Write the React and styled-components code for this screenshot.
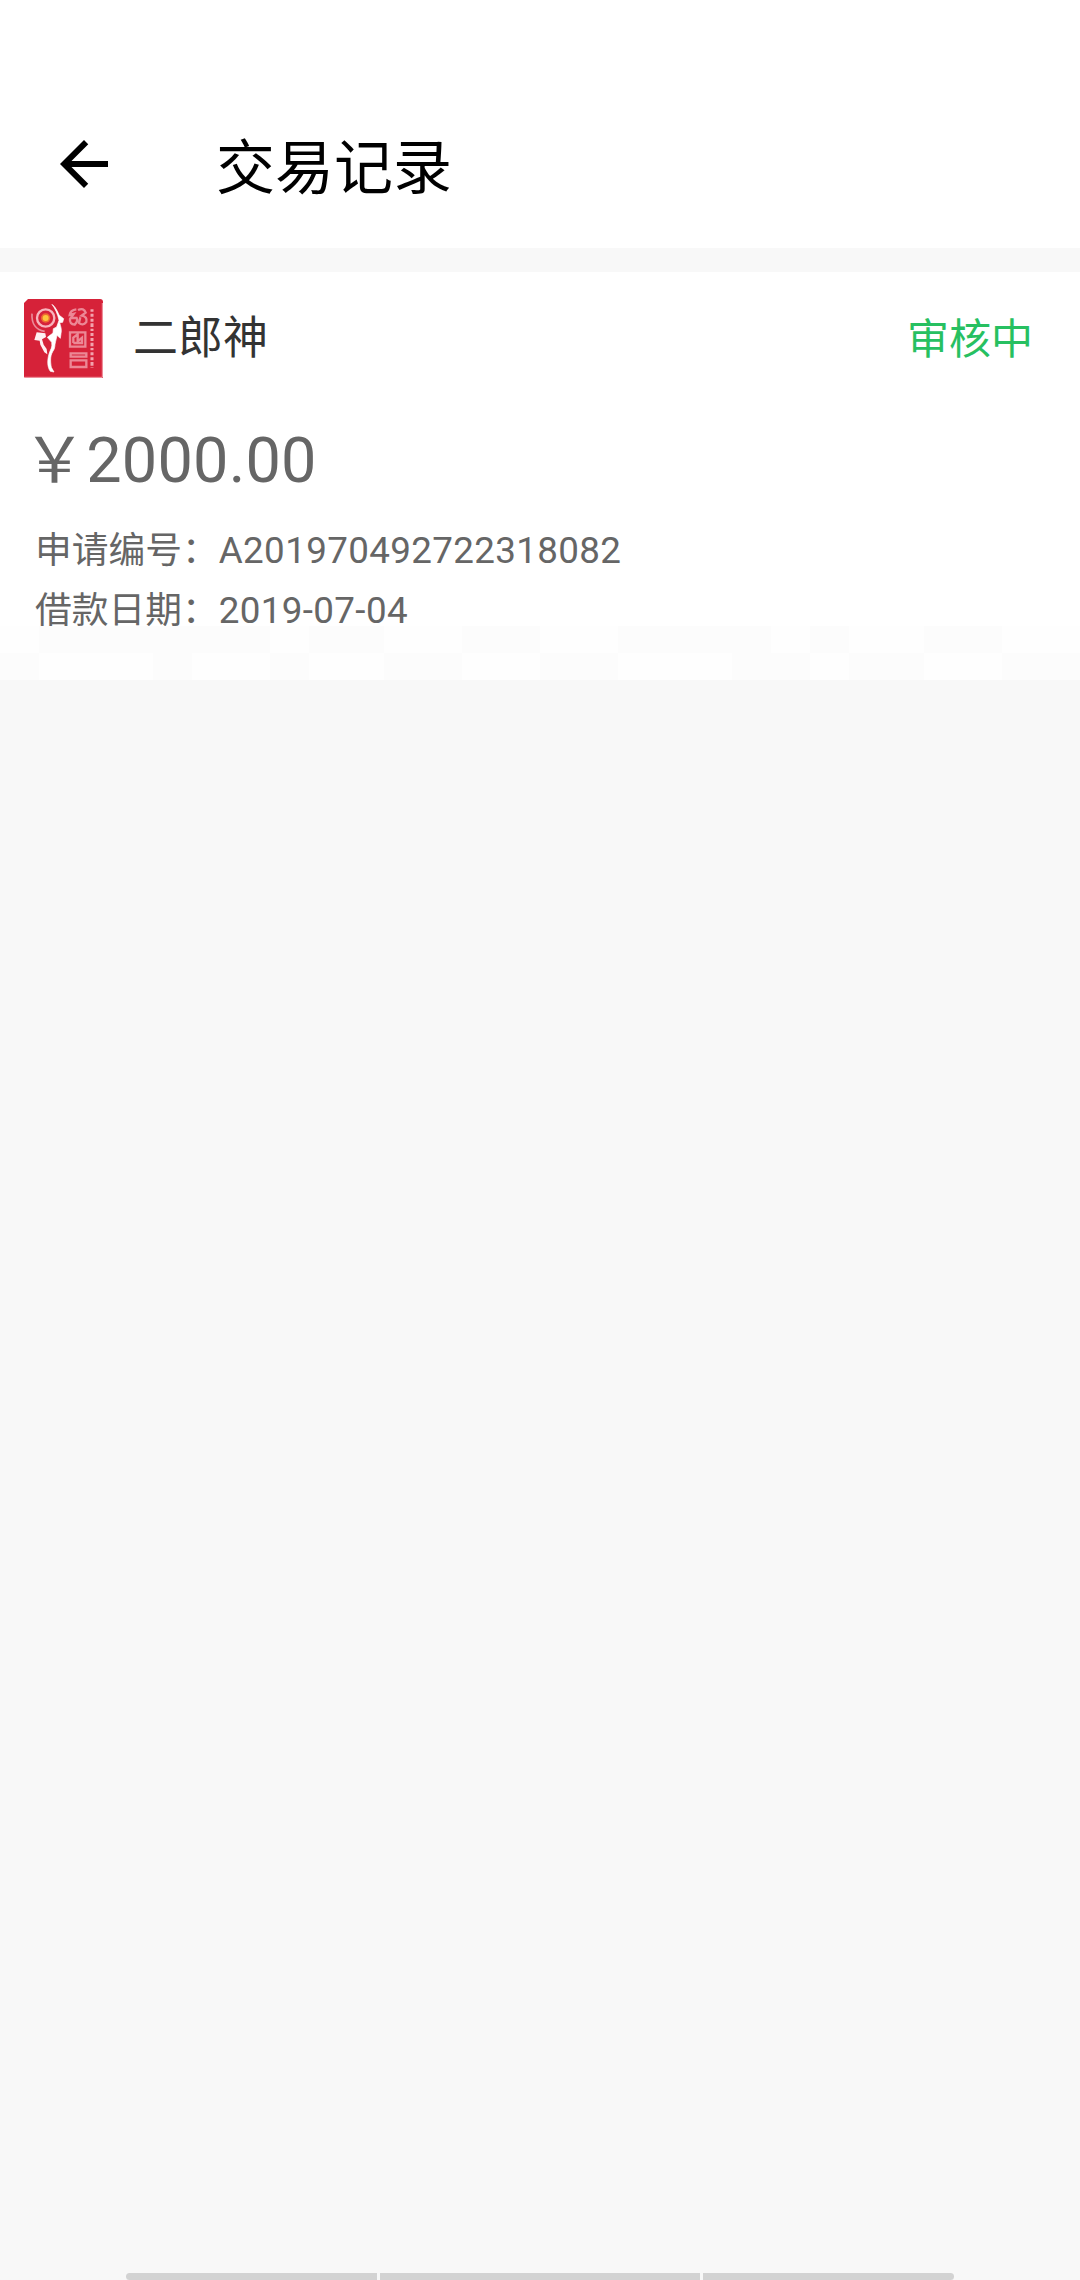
import React from 'react';
import styled, { createGlobalStyle } from 'styled-components';

const GlobalStyle = createGlobalStyle`
  body {
    margin: 0;
    background-color: #f8f8f8;
    font-family: Roboto, 'Noto Sans CJK SC', sans-serif;
  }
`;

const Screen = styled.div`
  display: flex;
  flex-direction: column;
  height: 2280px;
  overflow: hidden;
`;

const Header = styled.header`
  display: flex;
  align-items: center;
  box-sizing: border-box;
  height: 248px;
  padding: 80px 48px 0;
  background-color: white;
`;

const BackButton = styled.button`
  display: flex;
  border: 0;
  padding: 0;
  margin-right: 96px;
  background: none;
`;

const Title = styled.h1`
  margin: 0;
  padding-top: 9px;
  font-size: 59px;
  font-weight: 400;
  line-height: 84px;
  color: black;
`;

const Card = styled.section`
  display: flex;
  flex-direction: column;
  height: 408px;
  margin-top: 24px;
  background-color: white;
`;

const CardHeader = styled.div`
  display: flex;
  align-items: center;
  height: 132px;
  padding: 0 47px 0 24px;
`;

const Name = styled.div`
  flex: 1;
  margin-left: 30px;
  padding-bottom: 7px;
  font-size: 45px;
  color: #333333;
`;

const Status = styled.div`
  padding-bottom: 6px;
  font-size: 42px;
  color: #27c061;
`;

const Amount = styled.div`
  height: 111px;
  padding-left: 23px;
  font-size: 63px;
  line-height: 113px;
  letter-spacing: 0.2px;
  color: #666666;
`;

const Details = styled.div`
  height: 105px;
  padding: 6px 0 0 35px;
  overflow: hidden;
`;

const Detail = styled.div`
  height: 60px;
  font-size: 36.75px;
  line-height: 60px;
  color: #666666;
  white-space: nowrap;
`;

const Value = styled.span`
  letter-spacing: 0.36px;
`;

const TileRow = styled.div`
  display: flex;
  height: 27px;
`;

const Tile = styled.div`
  flex: 0 0 ${({ width }) => width}px;
  background-color: ${({ shaded }) => (shaded ? '#fcfcfc' : '#fefefe')};
`;

const NavHint = styled.footer`
  display: grid;
  grid-template-columns: 251px 320px 251px;
  justify-content: center;
  gap: 3px;
  margin-top: auto;
`;

const HintBar = styled.div`
  height: 7px;
  background-color: #d3d3d3;
  border-radius: ${({ radius }) => radius || '0'};
`;

// Tile widths, light and shaded tiles alternate
const tileRows = [
  {
    startShaded: false,
    widths: [39, 231, 39, 75, 78, 78, 78, 153, 39, 39, 75, 78, 78],
  },
  {
    startShaded: true,
    widths: [39, 114, 39, 78, 39, 75, 78, 78, 78, 114, 78, 39, 75, 78, 78],
  },
];

const BackIcon = () => (
  <svg width='72' height='72' viewBox='0 0 24 24'>
    <path d='M20 11H7.83l5.59-5.59L12 4l-8 8 8 8 1.41-1.41L7.83 13H20v-2z' />
  </svg>
);

const Logo = () => (
  <svg width='79' height='79' viewBox='42 42 237 237'>
    <filter id='soften'>
      <feGaussianBlur stdDeviation='2' />
    </filter>
    <path d='M54 42H270Q279 42 279 51V279H47Q42 279 42 274V54Z' fill='#d62239' />
    <path d='M43 277H277V54' fill='none' stroke='#f3a5af' strokeWidth='3' />
    <g filter='url(#soften)'>
      <circle
        cx='107'
        cy='99'
        r='26'
        fill='none'
        stroke='#f8b4bd'
        strokeWidth='7'
      />
      <circle cx='107' cy='99' r='14' fill='#ee6b32' />
      <circle cx='107' cy='99' r='9' fill='#fcc63c' />
      <path
        d='M66 86C64 116 78 135 104 139'
        fill='none'
        stroke='#ea8c99'
        strokeWidth='5'
      />
      <path
        d='M126 58C139 68 144 84 148 91L161 101L158 112L149 113C152 125 156 133 153 146L151 160L141 151L137 169C133 181 137 189 128 200C120 214 121 229 124 247L132 261L121 259C111 246 112 224 117 207C121 193 128 188 125 172L112 157L129 144L130 131L140 126L147 106C143 87 136 72 126 58Z'
        fill='white'
        stroke='white'
        strokeWidth='2'
      />
      <path
        d='M80 142L106 145L108 156L96 163L101 179L110 192L112 208L103 202L91 179L89 167L73 165Z'
        fill='#fff0f2'
      />
      <g fill='none' stroke='#ec8795' strokeWidth='7'>
        <path d='M199 73Q181 75 179 90L191 87L180 102Q178 117 194 119Q205 108 200 99H184M204 75Q222 67 227 83L215 92Q233 95 229 111Q218 124 207 114L211 97' />
        <path d='M180 142H226V185H180ZM190 174V158L203 148V169L216 158V174H190' />
        <path d='M182 205H229V215H182ZM182 226H229V246H182Z' />
      </g>
      <path
        d='M246 73V248'
        stroke='#f3a3ae'
        strokeWidth='9'
        strokeDasharray='7 6 9 6 9 5 11 5'
      />
    </g>
  </svg>
);

const App = () => (
  <>
    <GlobalStyle />
    <Screen>
      <Header>
        <BackButton aria-label='返回'>
          <BackIcon />
        </BackButton>
        <Title>交易记录</Title>
      </Header>
      <Card>
        <CardHeader>
          <Logo />
          <Name>二郎神</Name>
          <Status>审核中</Status>
        </CardHeader>
        <Amount>￥2000.00</Amount>
        <Details>
          <Detail>
            申请编号：<Value>A201970492722318082</Value>
          </Detail>
          <Detail>
            借款日期：<Value>2019-07-04</Value>
          </Detail>
        </Details>
        {tileRows.map(({ startShaded, widths }, row) => (
          <TileRow key={row}>
            {widths.map((width, i) => (
              <Tile
                key={i}
                width={width}
                shaded={(i % 2 === 0) === startShaded}
              />
            ))}
          </TileRow>
        ))}
      </Card>
      <NavHint>
        <HintBar radius='4px 0 0 4px' />
        <HintBar />
        <HintBar radius='0 4px 4px 0' />
      </NavHint>
    </Screen>
  </>
);

export default App;
